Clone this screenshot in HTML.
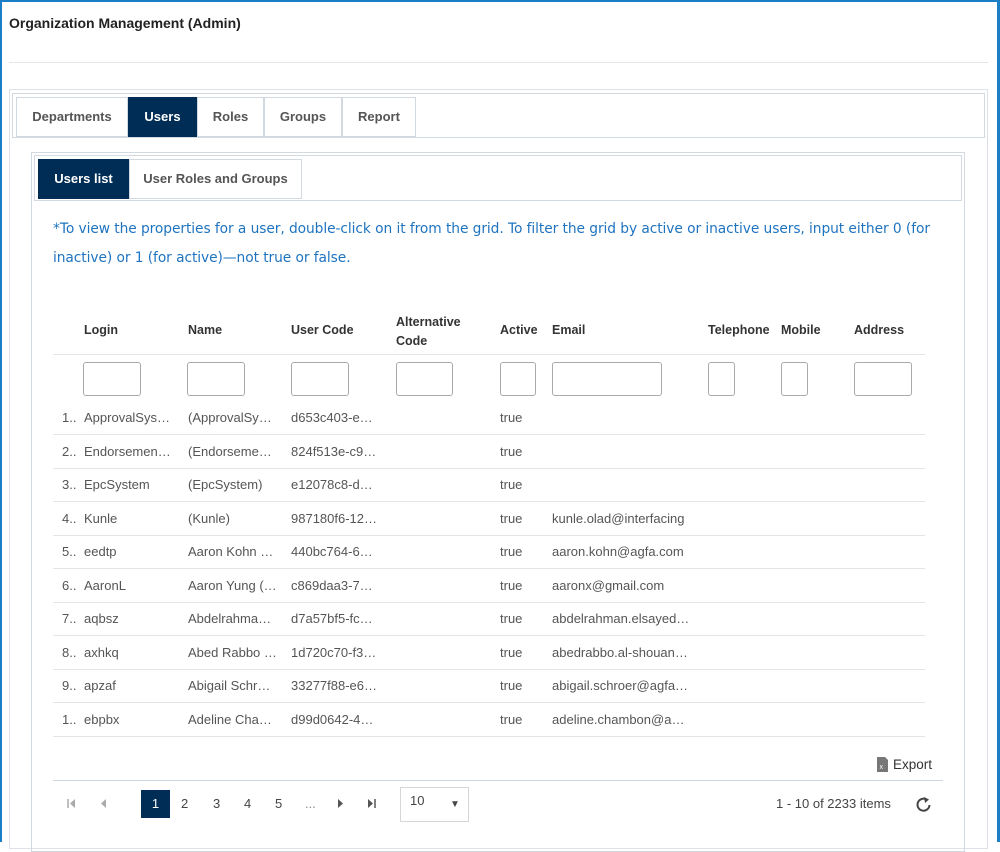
<!DOCTYPE html>
<html><head><meta charset="utf-8"><style>
*{box-sizing:border-box;margin:0;padding:0}
body{width:1000px;height:842px;overflow:hidden;background:#fff;font-family:"Liberation Sans",sans-serif;position:relative;color:#444}
.a{position:absolute}
.tab{position:absolute;height:40px;border:1px solid #d3d9e0;background:#fff;color:#555;font-weight:bold;font-size:13px;line-height:38px;text-align:center}
.tab.on{background:#002d55;color:#fff;border-color:#002d55}
.th{position:absolute;font-weight:bold;font-size:12.5px;color:#333}
.in{position:absolute;top:362px;height:34px;border:1px solid #aaa;border-radius:3px;background:#fff}
.row{position:absolute;left:53px;width:872px;height:34px;border-bottom:1px solid #e4e4e4;font-size:13px;color:#555}
.row span{position:absolute;top:9px;white-space:nowrap}
.pg{position:absolute;top:790px;font-size:13px;color:#444}
</style></head><body>
<div class="a" style="left:0;top:0;width:1000px;height:842px;border:2px solid #1a7fc4;border-bottom:none;border-left-width:2px;border-right-width:3px"></div>
<div class="a" style="left:9px;top:15px;font-size:14px;font-weight:bold;color:#222">Organization Management (Admin)</div>
<div class="a" style="left:9px;top:62px;width:979px;height:1px;background:#e3e6ea"></div>
<div class="a" style="left:9px;top:89px;width:979px;height:760px;border:1px solid #dde2e8"></div>
<div class="a" style="left:12px;top:93px;width:973px;height:45px;border:1px solid #d3d9e0"></div>
<div class="tab" style="left:16px;top:97px;width:112px">Departments</div>
<div class="tab on" style="left:128px;top:97px;width:69px">Users</div>
<div class="tab" style="left:197px;top:97px;width:67px">Roles</div>
<div class="tab" style="left:264px;top:97px;width:78px">Groups</div>
<div class="tab" style="left:342px;top:97px;width:74px">Report</div>
<div class="a" style="left:31px;top:152px;width:934px;height:700px;border:1px solid #d3d9e0"></div>
<div class="a" style="left:34px;top:155px;width:928px;height:46px;border:1px solid #d3d9e0"></div>
<div class="tab on" style="left:38px;top:159px;width:91px">Users list</div>
<div class="tab" style="left:129px;top:159px;width:173px">User Roles and Groups</div>
<div class="a" style="left:53px;top:215px;font-family:'DejaVu Sans',sans-serif;font-size:13.8px;color:#1f74c0;line-height:28.5px;white-space:nowrap;letter-spacing:-0.08px">*To view the properties for a user, double-click on it from the grid. To filter the grid by active or inactive users, input either 0 (for<br>inactive) or 1 (for active)—not true or false.</div>
<div class="th" style="left:84px;top:323px">Login</div>
<div class="th" style="left:188px;top:323px">Name</div>
<div class="th" style="left:291px;top:323px">User Code</div>
<div class="th" style="left:396px;top:313px;line-height:19px">Alternative<br>Code</div>
<div class="th" style="left:500px;top:323px">Active</div>
<div class="th" style="left:552px;top:323px">Email</div>
<div class="th" style="left:708px;top:323px">Telephone</div>
<div class="th" style="left:781px;top:323px">Mobile</div>
<div class="th" style="left:854px;top:323px">Address</div>
<div class="a" style="left:53px;top:354px;width:872px;height:1px;background:#e4e4e4"></div>
<div class="in" style="left:83px;width:58px"></div>
<div class="in" style="left:187px;width:58px"></div>
<div class="in" style="left:291px;width:58px"></div>
<div class="in" style="left:396px;width:57px"></div>
<div class="in" style="left:500px;width:36px"></div>
<div class="in" style="left:552px;width:110px"></div>
<div class="in" style="left:708px;width:27px"></div>
<div class="in" style="left:781px;width:27px"></div>
<div class="in" style="left:854px;width:58px"></div>

<div class="row" style="top:401px"><span style="left:9px">1..</span><span style="left:31px">ApprovalSys…</span><span style="left:135px">(ApprovalSy…</span><span style="left:238px">d653c403-e…</span><span style="left:447px">true</span></div>
<div class="row" style="top:435px"><span style="left:9px">2..</span><span style="left:31px">Endorsemen…</span><span style="left:135px">(Endorseme…</span><span style="left:238px">824f513e-c9…</span><span style="left:447px">true</span></div>
<div class="row" style="top:468px"><span style="left:9px">3..</span><span style="left:31px">EpcSystem</span><span style="left:135px">(EpcSystem)</span><span style="left:238px">e12078c8-d…</span><span style="left:447px">true</span></div>
<div class="row" style="top:502px"><span style="left:9px">4..</span><span style="left:31px">Kunle</span><span style="left:135px">(Kunle)</span><span style="left:238px">987180f6-12…</span><span style="left:447px">true</span><span style="left:499px">kunle.olad@interfacing</span></div>
<div class="row" style="top:535px"><span style="left:9px">5..</span><span style="left:31px">eedtp</span><span style="left:135px">Aaron Kohn …</span><span style="left:238px">440bc764-6…</span><span style="left:447px">true</span><span style="left:499px">aaron.kohn@agfa.com</span></div>
<div class="row" style="top:569px"><span style="left:9px">6..</span><span style="left:31px">AaronL</span><span style="left:135px">Aaron Yung (…</span><span style="left:238px">c869daa3-7…</span><span style="left:447px">true</span><span style="left:499px">aaronx@gmail.com</span></div>
<div class="row" style="top:602px"><span style="left:9px">7..</span><span style="left:31px">aqbsz</span><span style="left:135px">Abdelrahma…</span><span style="left:238px">d7a57bf5-fc…</span><span style="left:447px">true</span><span style="left:499px">abdelrahman.elsayed…</span></div>
<div class="row" style="top:636px"><span style="left:9px">8..</span><span style="left:31px">axhkq</span><span style="left:135px">Abed Rabbo …</span><span style="left:238px">1d720c70-f3…</span><span style="left:447px">true</span><span style="left:499px">abedrabbo.al-shouan…</span></div>
<div class="row" style="top:669px"><span style="left:9px">9..</span><span style="left:31px">apzaf</span><span style="left:135px">Abigail Schr…</span><span style="left:238px">33277f88-e6…</span><span style="left:447px">true</span><span style="left:499px">abigail.schroer@agfa…</span></div>
<div class="row" style="top:703px"><span style="left:9px">1..</span><span style="left:31px">ebpbx</span><span style="left:135px">Adeline Cha…</span><span style="left:238px">d99d0642-4…</span><span style="left:447px">true</span><span style="left:499px">adeline.chambon@a…</span></div>

<svg class="a" style="left:877px;top:757px" width="11" height="15"><path d="M0 0h8l3 3v12H0z" fill="#777"/><text x="2.5" y="12" font-size="7" fill="#fff" font-family="Liberation Sans">x</text></svg>
<div class="a" style="left:893px;top:757px;font-size:13.5px;color:#333">Export</div>
<div class="a" style="left:53px;top:780px;width:890px;height:1px;background:#cfd6dd"></div>
<svg class="a" style="left:67px;top:799px" width="10" height="9"><path d="M1 0v9" stroke="#aaa" stroke-width="1.5"/><path d="M8 0v9L3 4.5z" fill="#aaa"/></svg>
<svg class="a" style="left:100px;top:799px" width="6" height="9"><path d="M6 0v9L1 4.5z" fill="#aaa"/></svg>
<div class="a" style="left:141px;top:790px;width:29px;height:28px;background:#002d55;color:#fff;font-size:13px;text-align:center;line-height:28px">1</div>
<div class="pg" style="left:181px;top:796px">2</div>
<div class="pg" style="left:213px;top:796px">3</div>
<div class="pg" style="left:244px;top:796px">4</div>
<div class="pg" style="left:275px;top:796px">5</div>
<div class="pg" style="left:305px;top:796px;color:#888">...</div>
<svg class="a" style="left:338px;top:799px" width="6" height="9"><path d="M0 0v9L5 4.5z" fill="#555"/></svg>
<svg class="a" style="left:368px;top:799px" width="10" height="9"><path d="M0 0v9L5 4.5z" fill="#555"/><path d="M7 0v9" stroke="#555" stroke-width="1.5"/></svg>
<div class="a" style="left:400px;top:787px;width:69px;height:35px;border:1px solid #d6d6d6"></div>
<div class="pg" style="left:410px;top:793px">10</div>
<div class="pg" style="left:450px;top:799px;font-size:10px;color:#444">▼</div>
<div class="pg" style="left:776px;top:796px">1 - 10 of 2233 items</div>
<svg class="a" style="left:915px;top:796px" width="17" height="17" viewBox="0 0 17 17"><path d="M11.5 3.5A6 6 0 1 0 14.5 9" fill="none" stroke="#444" stroke-width="2"/><path d="M9 1l5 2.5-4 3.5z" fill="#444"/></svg>
</body></html>
